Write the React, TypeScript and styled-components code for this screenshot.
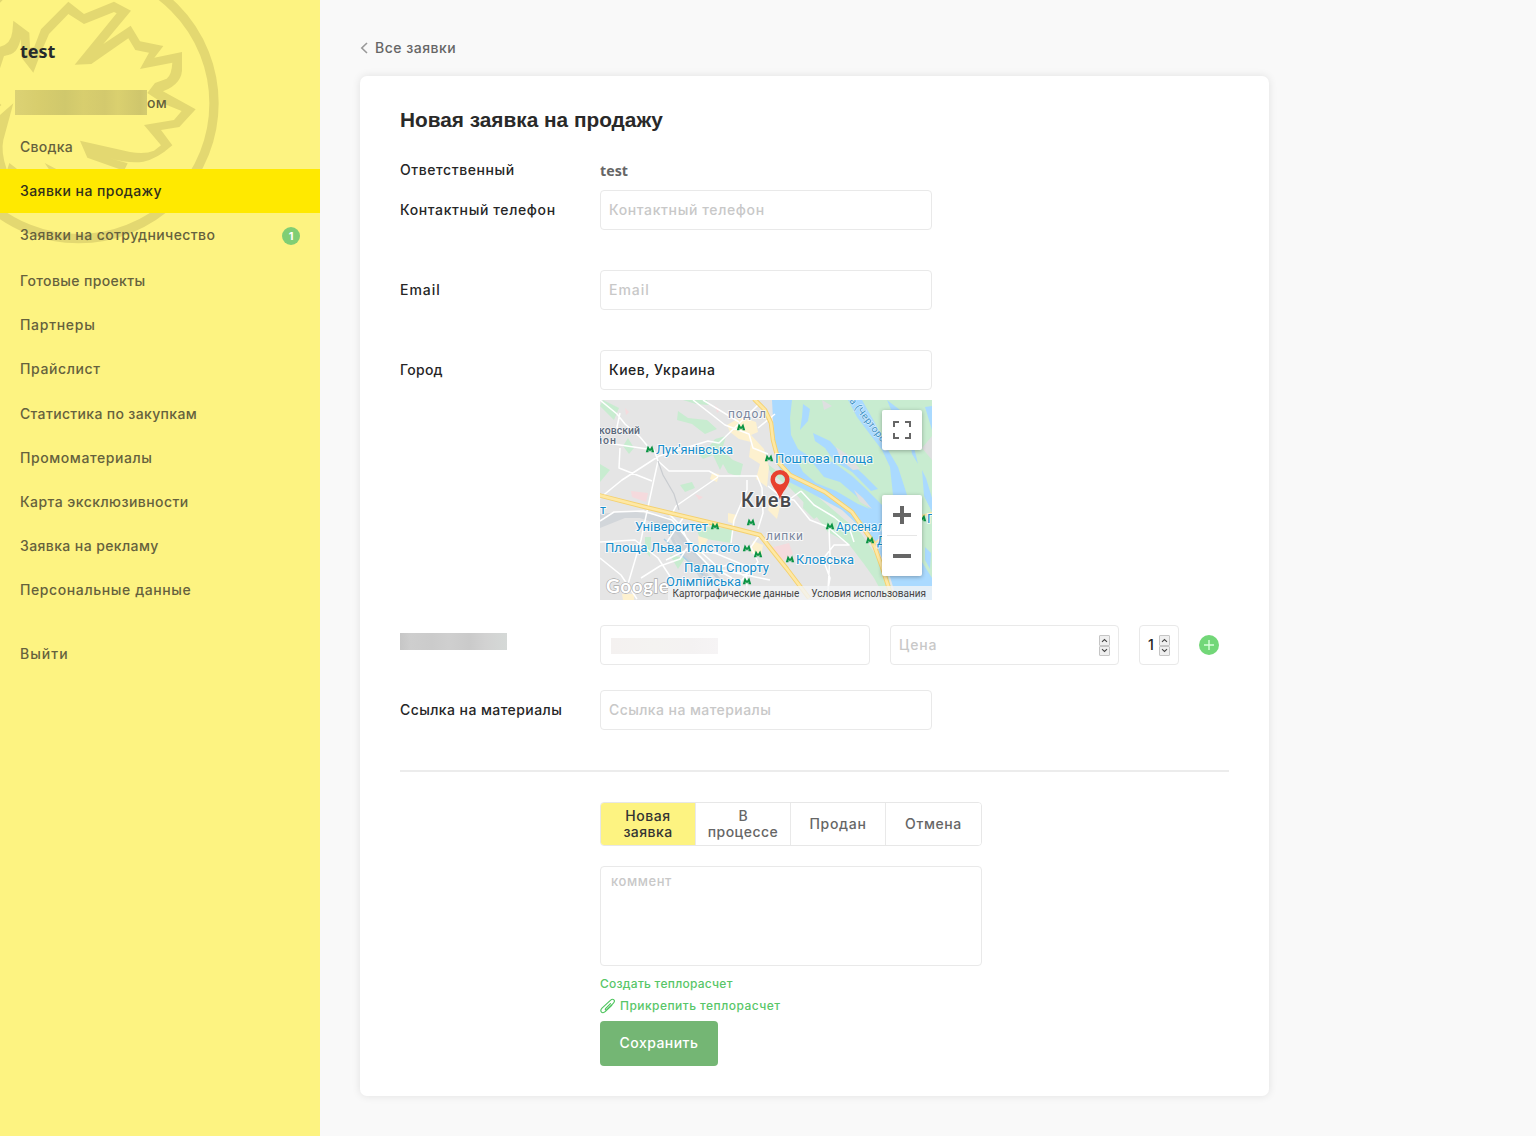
import React from 'react';
import styled, { createGlobalStyle } from 'styled-components';

const GlobalStyle = createGlobalStyle`
  *, *::before, *::after { box-sizing: border-box; }
  body { margin: 0; background: #f9f9f9; font-family: Inter, "Noto Sans", sans-serif; font-size: 14px; font-weight: 500; color: #222; }
  button, input, textarea { font: inherit; }
`;

const Page = styled.div`
  display: flex;
  height: 1136px;
  overflow: hidden;
`;

const Text = styled.span<{ $track?: number }>`
  white-space: nowrap;
  letter-spacing: ${(p) => p.$track ?? 0.65}px;
`;

/* Sidebar */
const Sidebar = styled.aside`
  position: relative;
  width: 320px;
  flex: none;
  background: #fdf381;
  overflow: hidden;
`;
const Emblem = styled.svg`
  position: absolute;
  left: 0;
  top: 0;
`;
const SideContent = styled.div`
  position: relative;
  display: flex;
  flex-direction: column;
`;
const UserName = styled.div`
  height: 90px;
  padding: 37px 20px 0;
  font: 700 18px/28px "Noto Sans", sans-serif;
  color: #262a2c;
`;
const Account = styled.div`
  display: flex;
  align-items: center;
  height: 25px;
  margin: 0 0 10px 15px;
  color: #65613d;
`;
const AccountMask = styled.div`
  width: 132px;
  height: 25px;
  background: linear-gradient(90deg, #dcd274 0, #d7cd6d 18%, #d0c86c 38%, #d8ce6e 52%, #d3c96d 68%, #dad06f 78%, #cfc66c 95%, #d4cc70 100%);
`;
const NavItem = styled.a<{ $active?: boolean; $tall?: boolean; $gap?: number }>`
  display: flex;
  align-items: center;
  justify-content: space-between;
  height: ${(p) => (p.$tall ? 46 : 44)}px;
  padding: 0 20px ${(p) => (p.$tall ? 3 : 2)}px;
  margin-top: ${(p) => p.$gap ?? 0}px;
  background: ${(p) => (p.$active ? '#ffe900' : 'transparent')};
  color: ${(p) => (p.$active ? '#302f1c' : '#65613d')};
`;
const Count = styled.span`
  display: flex;
  align-items: center;
  justify-content: center;
  width: 18px;
  height: 18px;
  margin-top: 2px;
  border-radius: 50%;
  background: #80ce74;
  color: #fff;
  font-size: 11px;
  font-weight: 700;
`;

/* Main column */
const Main = styled.main`
  width: 949px;
  padding: 36px 0 40px 40px;
`;
const Back = styled.a`
  display: flex;
  align-items: center;
  gap: 7px;
  height: 24px;
  margin-bottom: 16px;
  padding-bottom: 1px;
  color: #666;
`;
const Card = styled.section`
  height: 1020px;
  padding: 30px 40px;
  background: #fff;
  border-radius: 7px;
  box-shadow: 0 0 9px rgba(0, 0, 0, 0.1);
`;
const Title = styled.h1`
  margin: 0 0 24px;
  font: 700 20.8px/28px "Liberation Sans", Arial, sans-serif;
  color: #292929;
  white-space: nowrap;
`;
const Row = styled.div<{ $h: number; $after?: number }>`
  display: flex;
  height: ${(p) => p.$h}px;
  margin-bottom: ${(p) => p.$after ?? 0}px;
`;
const Label = styled.label<{ $h?: number }>`
  display: flex;
  align-items: center;
  flex: none;
  width: 200px;
  height: ${(p) => p.$h ?? 40}px;
  padding-bottom: 2px;
  color: #262626;
`;
const Manager = styled.strong`
  padding-top: 3px;
  font: 700 14.2px/20px "Noto Sans", sans-serif;
  color: #666;
`;
const Control = styled.div<{ $w?: number; $filled?: boolean }>`
  display: flex;
  align-items: center;
  justify-content: space-between;
  width: ${(p) => p.$w ?? 332}px;
  height: 40px;
  padding: 0 8px 2px;
  border: 1px solid #e9e9e9;
  border-radius: 4px;
  background: #fff;
  color: ${(p) => (p.$filled ? '#222' : '#c8c8c8')};
`;
const Inline = styled.div`
  display: flex;
  align-items: center;
  gap: 20px;
`;
const LabelMask = styled.div`
  width: 107px;
  height: 17px;
  margin-bottom: 5px;
  background: linear-gradient(90deg, #c6c6c6, #cecece 10%, #cbcbcb 30%, #cfcfcf 45%, #cacaca 65%, #d2d2d2 80%, #d5d9d7);
`;
const ValueMask = styled.div`
  width: 107px;
  height: 16px;
  margin: 4px 0 0 2px;
  background: linear-gradient(90deg, #f4f1f0, #f4f3f1 40%, #f4f2f2 75%, #f6f4f5);
`;
const Spinner = styled.span`
  display: flex;
  flex-direction: column;
  width: 11px;
  height: 21px;
  margin-top: 3px;
`;
const Step = styled.span`
  display: flex;
  align-items: center;
  justify-content: center;
  flex: 1;
  border: 1px solid #c5c5c5;
  border-radius: 1px;
  background: #efefef;
`;
const AddButton = styled.button`
  display: flex;
  align-items: center;
  justify-content: center;
  width: 20px;
  height: 20px;
  padding: 0;
  border: 0;
  border-radius: 50%;
  background: #72d778;
`;

/* Map */
const MapBox = styled.div`
  position: relative;
  width: 332px;
  height: 200px;
  overflow: hidden;
`;
const MapTools = styled.div`
  position: absolute;
  top: 10px;
  right: 10px;
  display: flex;
  flex-direction: column;
  gap: 45px;
`;
const Tool = styled.div<{ $h: number }>`
  display: flex;
  flex-direction: column;
  align-items: center;
  justify-content: center;
  width: 40px;
  height: ${(p) => p.$h}px;
  background: #fff;
  border-radius: 2px;
  box-shadow: 0 1px 4px rgba(0, 0, 0, 0.3);
`;
const Credits = styled.div`
  position: absolute;
  right: 0;
  bottom: 0;
  display: flex;
  gap: 12px;
  height: 14px;
  padding: 0 6px 0 5px;
  background: rgba(242, 244, 245, 0.8);
  font: 400 10px/16px Roboto, sans-serif;
  color: #444;
  white-space: nowrap;
`;

/* Footer */
const Divider = styled.hr`
  height: 2px;
  margin: 0 0 30px;
  border: 0;
  background: #ececec;
`;
const Actions = styled.div`
  display: flex;
  flex-direction: column;
  align-items: flex-start;
  width: 382px;
  margin-left: 200px;
`;
const Tabs = styled.div`
  display: grid;
  grid-template-columns: 95px 95px 95px 1fr;
  width: 382px;
  height: 44px;
  margin-bottom: 20px;
  border: 1px solid #e7e7e7;
  border-radius: 4px;
  overflow: hidden;
`;
const Tab = styled.div<{ $active?: boolean }>`
  display: flex;
  flex-direction: column;
  align-items: center;
  justify-content: center;
  line-height: 16px;
  background: ${(p) => (p.$active ? '#fdf381' : '#fff')};
  color: ${(p) => (p.$active ? '#333' : '#666')};
  &:not(:last-child) { border-right: 1px solid #e9e9e9; }
`;
const Comment = styled.div`
  width: 382px;
  height: 100px;
  margin-bottom: 7px;
  padding: 6px 10px;
  border: 1px solid #e9e9e9;
  border-radius: 4px;
  font-size: 13px;
  line-height: 16px;
  color: #c8c8c8;
`;
const Link = styled.a`
  display: flex;
  align-items: center;
  gap: 4px;
  height: 22px;
  padding-bottom: 2px;
  font-size: 12px;
  color: #58c668;
  svg { margin-top: 2px; }
`;
const Save = styled.button`
  width: 118px;
  height: 45px;
  margin-top: 4px;
  padding: 0 0 2px;
  border: 0;
  border-radius: 4px;
  background: #74b674;
  color: #fff;
`;

type NavEntry = { text: string; track: number; active?: boolean; count?: number; gap?: number };
const nav: NavEntry[] = [
  { text: 'Сводка', track: 0.25 },
  { text: 'Заявки на продажу', track: 0.44, active: true },
  { text: 'Заявки на сотрудничество', track: 0.41, count: 1 },
  { text: 'Готовые проекты', track: 0.37 },
  { text: 'Партнеры', track: 0.7 },
  { text: 'Прайслист', track: 0.62 },
  { text: 'Статистика по закупкам', track: 0.34, gap: 1 },
  { text: 'Промоматериалы', track: 0.58 },
  { text: 'Карта эксклюзивности', track: 0.45 },
  { text: 'Заявка на рекламу', track: 0.4 },
  { text: 'Персональные данные', track: 0.6 },
  { text: 'Выйти', track: 1, gap: 20 },
];

const LeafEmblem = () => (
  <Emblem width="320" height="260" viewBox="0 0 960 780">
    <circle cx="236" cy="310" r="406" fill="none" stroke="#e3d871" strokeWidth="28" />
    <g fill="#e3d871">
      <path d="M100 218L66 175L62 118C52 158 38 164 12 168L0 205V140Q33 132 37 95L40 62L88 98L90 143L103 140L123 88L205 5L252 42L342 5L393 32L310 132L392 77L420 124L490 138L463 173L546 156L546 200Q550 250 489 274L587 328L538 381L483 390L517 436Q470 478 430 485Q385 491 325 473L383 490L372 512L262 473L240 422L390 456Q435 464 462 452L483 436L432 375L522 360L545 333L491 311L442 279L465 249L500 236Q515 225 517 188L420 207L447 158L406 150L385 115L274 192L224 194L350 40L342 36L252 72L205 42L147 102L122 160Z" />
      <path d="M40 310L0 345V508H20Q2 455 10 420ZM28 489L52 508H22ZM134 489L170 508H147ZM0 0H8L0 8ZM0 311L4 315L0 319Z" />
    </g>
  </Emblem>
);

const metro: [number, number][] = [
  [50, 49], [141, 27], [169, 58], [151, 122], [115, 126], [147, 148],
  [158, 154], [147, 181], [190, 159], [230, 126], [270, 140], [322, 118],
];
const stations: [string, number, number, number][] = [
  ["Лук'янівська", 56, 53.5, 77], ['Поштова площа', 175, 62.5, 98], ['Університет', 35, 130.5, 73],
  ['Площа Льва Толстого', 5, 152, 135], ['Палац Спорту', 84, 171.5, 85], ['Олімпійська', 66, 186, 75],
  ['Кловська', 196, 164, 58], ['Арсенальна', 236, 130.5, 69], ['Д', 277, 145, 9], ['П', 327, 123, 9], ['т', 0, 113.5, 6],
];

const CityMap = () => (
  <svg width="332" height="200" viewBox="0 0 332 200">
    <rect width="332" height="200" fill="#e5e5e5" />
    <g fill="#c8ecd0">
      <path d="M83 0H107L109 5L96 4ZM78 11L88 18L107 20L117 29L105 34L92 24L77 20ZM126 36L122 50L133 60L143 64L140 77L128 73L123 64L120 70L113 55L103 59L96 51L109 47L115 39ZM80 85L92 82L95 88L85 92ZM95 126L133 129L131 143L100 138ZM0 64L10 70L0 82ZM3 0L19 8L14 20L0 6ZM70 155L85 158L78 169ZM28 38L34 48L29 54L23 46ZM165 62L178 72L210 90L245 120L260 132L276 155L288 175L294 200H286L274 178L264 164L248 143L228 132L213 112L190 88L171 73Z" />
      <path d="M204 97L214 103L223 113L214 119L203 108ZM45 137H51L50 157L45 151Z" />
    </g>
    <path d="M172 0H332V200H297L288 170L276 146L258 125L242 110L209 92L185 80L177 63L174 38Z" fill="#aadaff" />
    <g fill="#c8ecd0">
      <path d="M192 0H248L257 17L272 37L282 50L290 67L293 95L293 128L286 118L282 105L266 89L252 76L233 62L213 59L198 49L191 35L190 18Z" />
      <path d="M262 0H332V178L322 162L307 120V95L298 67L288 50L275 23ZM196 58L212 62L224 77L240 82L254 94L270 109L258 104L236 91L216 83L203 72Z" />
    </g>
    <g fill="#aadaff">
      <path d="M213 33L230 41L242 55L264 75L278 89L271 91L252 72L234 61L225 48L215 41ZM287 0L300 10L314 17L309 24L294 17ZM308 26L313 43L318 64L312 54ZM325 147L331 153L330 169L325 160ZM325 7L332 6V30ZM322 70L326 78L332 98V112L324 96Z" />
      <path d="M203 4L210 9L208 21L200 30L202 17Z" />
    </g>
    <path d="M236 47L248 55L260 69L253 70L241 60ZM254 90L263 98L272 109L260 102ZM322 48L332 36V60ZM222 0L232 6L224 10Z" fill="#dedfe0" />
    <g fill="#fdf1cf">
      <path d="M127 25L141 17L156 22L158 32L151 35L164 49L169 67L167 87L156 79L160 64L149 57L151 42L139 39L130 32ZM112 73L119 74L117 82L110 79ZM128 113L137 115L134 124L128 122ZM153 141L163 145L161 157L151 153ZM98 136L108 139L99 157L94 155L99 147ZM171 100L180 106L177 119L168 110ZM120 191L128 187V200H120ZM22 194H34V200H23Z" />
    </g>
    <path d="M31 91L48 93L46 102L32 97ZM95 94L103 97L99 100ZM115 5L120 10L117 13ZM170 148L189 143L193 154L180 162L176 156ZM25 8L29 12L26 15Z" fill="#f5dadd" />
    <path d="M0 114L30 111L68 117L86 138L101 160L115 188L104 185L88 159L66 127L40 118L25 118L0 128Z" fill="#d2d6da" />
    <path d="M64 123L78 149L113 184M70 124L92 150L120 180" fill="none" stroke="#ccd3d9" strokeWidth="3" />
    <path d="M64 139L103 175" stroke="#aad0e8" strokeWidth="1.5" />
    <g fill="none" stroke="#fff" strokeWidth="1.5" strokeLinejoin="round">
      <path d="M0 42L54 50L58 61L46 116L41 140L28 184M0 0L17 14L25 24L40 37L50 49M20 48L19 68L52 81M0 98L22 80L59 56L108 41L119 43L158 5M58 61L69 71L109 71L118 76L157 76L162 88L163 113L158 129M118 77L76 106L72 114M68 113L81 126L90 146L107 164L132 178M147 80L147 90L134 120L131 143M0 142L35 140L58 158L77 187M0 158L21 175L37 199M66 160L87 150L115 153L146 166L147 190M83 118L67 142M93 0L125 25L149 34L153 48L168 54M103 0L139 22M0 121L14 112L43 111L72 120L90 142L121 170L170 180M124 200L158 162L151 147L160 134M168 86L184 99L194 100L210 120L228 127L249 145L234 145L223 159L230 178L226 200M201 91L190 99M201 91L214 105L234 117L250 130L254 142M175 14L158 28M20 13L17 27L22 34M41 178L60 166L80 159L87 148M100 156L112 169L128 165L144 176M229 128L230 155L228 190L238 199M172 82L179 95L171 103" />
    </g>
    <path d="M58 61L63 75L74 94L79 110" fill="none" stroke="#c9ccd0" strokeWidth="1.2" />
    <g fill="none" strokeLinejoin="round">
      <path d="M154 -1L165 10L171 23L173 40L179 63L190 75L225 92L252 112L273 142L282 167L293 201M-2 95L45 107L133 128L160 135L171 149L187 169L209 198" stroke="#f5d16e" strokeWidth="4.5" />
      <path d="M154 -1L165 10L171 23L173 40L179 63L190 75L225 92L252 112L273 142L282 167L293 201M-2 95L45 107L133 128L160 135L171 149L187 169L209 198" stroke="#fee8a4" strokeWidth="2.7" />
      <path d="M272 146L283 136M318 117L332 113" stroke="#fbe29b" strokeWidth="2" />
    </g>
    <g fontFamily="Roboto, sans-serif" paintOrder="stroke" stroke="#fff" strokeOpacity="0.75" strokeWidth="2.2" strokeLinejoin="round">
      <g fontSize="12" fill="#7b879e" fontWeight="400">
        <text x="128" y="17.5" textLength="38">подол</text>
        <text x="166" y="139.500" textLength="37">липки</text>
      </g>
      <g fontSize="10.5" fill="#5c687a" strokeWidth="1.2">
        <text x="-1" y="33.500" textLength="41">ковский</text>
        <text x="-4" y="43.500" textLength="20">йон</text>
      </g>
      <g fontSize="12.8" fill="#158dcb" fontWeight="400">
        {stations.map(([name, x, y, width]) => (
          <text key={name} x={x} y={y} textLength={width} lengthAdjust="spacingAndGlyphs">{name}</text>
        ))}
      </g>
      <text fontSize="10" fill="#3b91c5" fontWeight="400" strokeWidth="1" transform="translate(249 1) rotate(52)" textLength="63">а (Черторой)</text>
      <text x="141" y="107" fontSize="20" fontWeight="500" fill="#48494c" textLength="50">Киев</text>
    </g>
    <g fill="#0b9444">
      {metro.map(([x, y]) => (
        <path key={`${x}-${y}`} transform={`translate(${x} ${y})`} d="M-4.2 3.200L-2.200 -3.500L0 0L2.200 -3.500L4.200 3.200H1.500L1.300 0.800L0 2.800L-1.300 0.800L-1.500 3.200Z" />
      ))}
    </g>
    <path fillRule="evenodd" d="M180 99.500C178.500 92 170.500 86 170.500 79.500A9.500 9.500 0 0 1 189.500 79.500C189.500 86 181.500 92 180 99.500ZM180 74.500A5 5 0 1 0 180 84.500A5 5 0 1 0 180 74.500Z" fill="#e8412f" />
    <text x="6" y="192.500" fontFamily="Lato, sans-serif" fontSize="19" fontWeight="700" textLength="63" fill="#fff" stroke="#aaa" strokeWidth="1.300" paintOrder="stroke">Google</text>
  </svg>
);

const NumberSpinner = () => (
  <Spinner>
    <Step><svg width="7" height="5" viewBox="0 0 7 5"><path d="M1 3.800L3.500 1.500L6 3.800" fill="none" stroke="#444" strokeWidth="1.100" /></svg></Step>
    <Step><svg width="7" height="5" viewBox="0 0 7 5"><path d="M1 1.200L3.500 3.500L6 1.200" fill="none" stroke="#444" strokeWidth="1.100" /></svg></Step>
  </Spinner>
);

export default function App() {
  return (
    <Page>
      <GlobalStyle />
      <Sidebar>
        <LeafEmblem />
        <SideContent>
          <UserName>test</UserName>
          <Account><AccountMask /><Text $track={0.2}>ом</Text></Account>
          {nav.map((n) => (
            <NavItem key={n.text} $active={n.active} $tall={!!n.count} $gap={n.gap}>
              <Text $track={n.track}>{n.text}</Text>
              {n.count && <Count>{n.count}</Count>}
            </NavItem>
          ))}
        </SideContent>
      </Sidebar>
      <Main>
        <Back>
          <svg width="8" height="12" viewBox="0 0 8 12"><path d="M7 1L1.800 6L7 11" fill="none" stroke="#999" strokeWidth="1.600" /></svg>
          <Text $track={0.5}>Все заявки</Text>
        </Back>
        <Card>
          <Title>Новая заявка на продажу</Title>
          <Row $h={32}>
            <Label $h={24}><Text $track={0.56}>Ответственный</Text></Label>
            <Manager>test</Manager>
          </Row>
          <Row $h={40} $after={40}>
            <Label><Text $track={0.62}>Контактный телефон</Text></Label>
            <Control><Text $track={0.62}>Контактный телефон</Text></Control>
          </Row>
          <Row $h={40} $after={40}>
            <Label><Text $track={0.95}>Email</Text></Label>
            <Control><Text $track={0.95}>Email</Text></Control>
          </Row>
          <Row $h={40} $after={10}>
            <Label><Text $track={0.25}>Город</Text></Label>
            <Control $filled><Text $track={0.5}>Киев, Украина</Text></Control>
          </Row>
          <Row $h={200} $after={25}>
            <Label as="div" />
            <MapBox>
              <CityMap />
              <MapTools>
                <Tool $h={40}>
                  <svg width="18" height="18" viewBox="0 0 18 18"><path d="M1 6V1H6M12 1H17V6M17 12V17H12M6 17H1V12" fill="none" stroke="#666" strokeWidth="2" /></svg>
                </Tool>
                <Tool $h={81}>
                  <svg width="30" height="81" viewBox="0 0 30 81">
                    <path d="M6 20H24M15 11V29M6 61H24" stroke="#666" strokeWidth="4" />
                    <path d="M0 40.500H30" stroke="#e6e6e6" />
                  </svg>
                </Tool>
              </MapTools>
              <Credits>
                <Text $track={0}>Картографические данные</Text>
                <Text $track={0}>Условия использования</Text>
              </Credits>
            </MapBox>
          </Row>
          <Row $h={40} $after={25}>
            <Label><LabelMask /></Label>
            <Inline>
              <Control $w={270}><ValueMask /></Control>
              <Control $w={229}><Text $track={0.85}>Цена</Text><NumberSpinner /></Control>
              <Control $w={40} $filled><Text $track={0}>1</Text><NumberSpinner /></Control>
              <AddButton><svg width="12" height="12" viewBox="0 0 12 12"><path d="M1 6H11M6 1V11" stroke="#d9ffdb" strokeWidth="1.400" /></svg></AddButton>
            </Inline>
          </Row>
          <Row $h={40} $after={40}>
            <Label><Text $track={0.42}>Ссылка на материалы</Text></Label>
            <Control><Text $track={0.42}>Ссылка на материалы</Text></Control>
          </Row>
          <Divider />
          <Actions>
            <Tabs>
              <Tab $active><Text $track={0.6}>Новая</Text><Text $track={0.45}>заявка</Text></Tab>
              <Tab><Text $track={0}>В</Text><Text $track={0.5}>процессе</Text></Tab>
              <Tab><Text $track={0.7}>Продан</Text></Tab>
              <Tab><Text $track={0.6}>Отмена</Text></Tab>
            </Tabs>
            <Comment><Text $track={0.58}>коммент</Text></Comment>
            <Link><Text $track={0.26}>Создать теплорасчет</Text></Link>
            <Link>
              <svg width="16" height="16" viewBox="0 0 16 16">
                <path d="M10.500 5.200L5.800 9.900C4.600 11.200 5.700 12.300 7 11.100L13.200 5C16 2.100 13.200 -0.600 10.400 2L2 9.800C-0.800 12.700 2.300 16 5.200 13.300L11.800 7" transform="translate(0 .4)" fill="none" stroke="#4cc45c" strokeWidth="1.100" strokeLinecap="round" />
              </svg>
              <Text $track={0.46}>Прикрепить теплорасчет</Text>
            </Link>
            <Save><Text $track={0.46}>Сохранить</Text></Save>
          </Actions>
        </Card>
      </Main>
    </Page>
  );
}
